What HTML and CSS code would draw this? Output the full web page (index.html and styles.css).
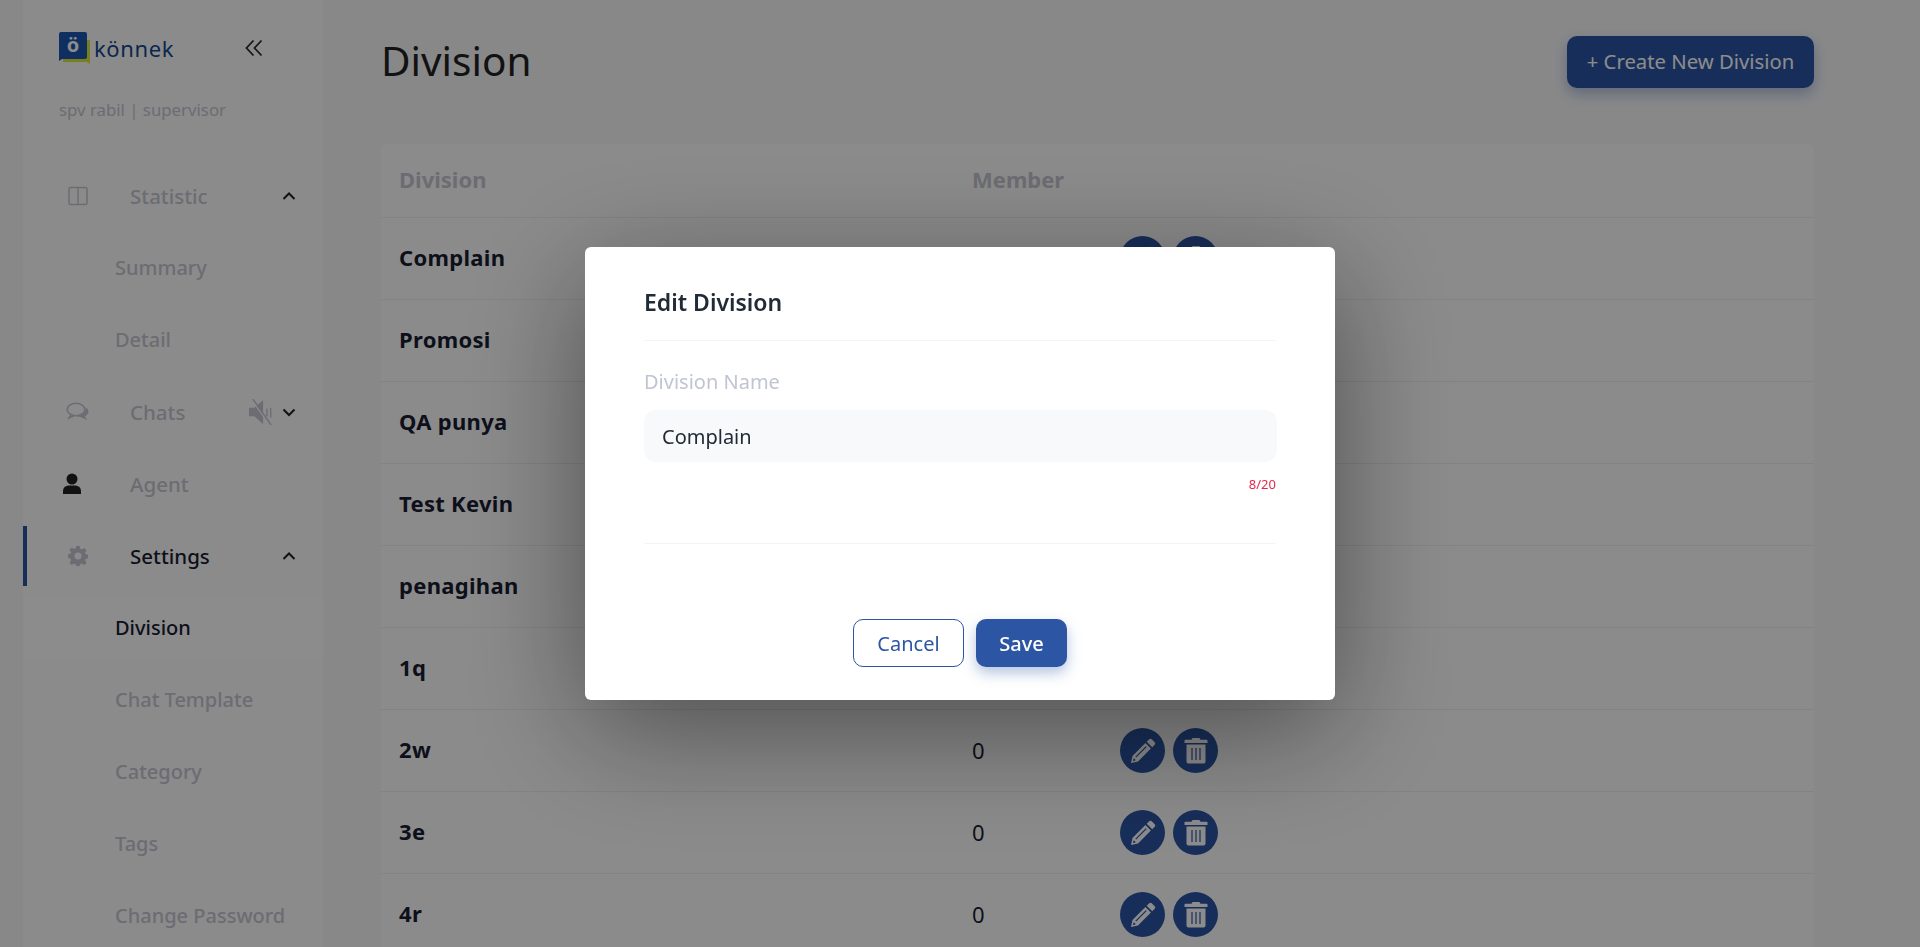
FILE: index.html
```html
<!DOCTYPE html>
<html lang="en">
<head>
  <meta charset="UTF-8" />
  <title>Division</title>
  <link rel="stylesheet" href="styles.css">
</head>
<body>

  <svg class="defs" width="0" height="0">
    <symbol id="i-pencil" viewBox="0 0 26 26">
      <path fill-rule="evenodd" d="M19.200 1.300a1.800 1.800 0 0 1 2.500 0l3 3a1.800 1.800 0 0 1 0 2.500l-2.500 2.500-5.500-5.500zM15.400 5.100l5.500 5.500L8 23.500 1 25l1.500-7zM15.800 8.200 5.300 18.700l.9.900L16.700 9.100zM3.600 20.500l-.7 2.600 2.600-.7-.5-1.400z"/>
    </symbol>
    <symbol id="i-trash" viewBox="0 0 24 26">
      <path fill-rule="evenodd" d="M8.500 0h7l1 1.800H22.500a1 1 0 0 1 1 1V5H.5V2.800a1 1 0 0 1 1-1h6zM2.500 6.500h19V23.500a2 2 0 0 1-2 2h-15a2 2 0 0 1-2-2zM7.400 10v12h1.200V10zM11.400 10v12h1.200V10zM15.400 10v12h1.200V10z"/>
    </symbol>
  </svg>

  <div class="pagina">
    <!-- Menu lateral -->
    <aside class="sidebar">
      <div class="logo-fila">
        <div class="logo">
          <svg class="logo-marca" width="32" height="32" viewBox="0 0 32 32">
            <path fill="#dde733" d="M4 8h27v24l-3-2H4z"/>
            <path fill="#1a57ae" d="M2 0h24a2 2 0 0 1 2 2v23a2 2 0 0 1-2 2H3l-3 2V2a2 2 0 0 1 2-2z"/>
            <text x="14" y="20" text-anchor="middle" class="logo-o">ö</text>
          </svg>
          <span class="logo-texto">könnek</span>
        </div>
        <svg class="colapsar" width="18" height="18" viewBox="0 0 18 18">
          <path d="M8.500 1.500 1.500 9l7 7.500M16.500 1.500 9.500 9l7 7.500"/>
        </svg>
      </div>
      <p class="usuario">spv rabil | supervisor</p>

      <nav class="menu">
        <div class="menu-item">
          <span class="menu-icono">
            <svg width="20" height="20" viewBox="0 0 20 20" class="gris-linea"><rect x="1" y="1.500" width="18" height="17" rx="1.500"/><path d="M10 1.500v17"/></svg>
          </span>
          <span class="menu-texto">Statistic</span>
          <svg class="flecha" width="14" height="14" viewBox="0 0 14 14"><path d="M1.500 10 7 4.500l5.500 5.500"/></svg>
        </div>
        <div class="submenu">
          <a class="sub-item">Summary</a>
          <a class="sub-item">Detail</a>
        </div>

        <div class="menu-item">
          <span class="menu-icono">
            <svg width="24" height="20" viewBox="0 0 24 20"><ellipse cx="10" cy="7.500" rx="8.800" ry="6.200" class="burbuja"/><path d="M5 12.500l-2 3.500 5-2.200" class="burbuja"/><path fill="#c5c5d0" d="M19.500 5.500c3.500 1.500 4.500 6-.5 8.800l2 3.700-6.500-3c-2 0-3.500-.5-4.500-1.200 5.500 0 10.500-3.300 9.500-8.300z"/></svg>
          </span>
          <span class="menu-texto">Chats</span>
          <svg class="mudo" width="26" height="26" viewBox="0 0 24 24">
            <path d="M0 8h5l8-7v22l-8-7H0z" fill="#c5c5d0"/>
            <path d="M16.500 9v7M20 8v9" class="mudo-barras"/>
            <path d="M2 0l17 24" class="mudo-hueco"/>
            <path d="M3.500 0l17 24" class="mudo-barras"/>
          </svg>
          <svg class="flecha" width="14" height="14" viewBox="0 0 14 14"><path d="M1.500 4.500 7 10l5.500-5.500"/></svg>
        </div>

        <div class="menu-item">
          <span class="menu-icono icono-izq">
            <svg width="20" height="22" viewBox="0 0 20 22" class="negro"><circle cx="10" cy="6" r="5.500"/><path d="M1 21v-3a5.500 5.500 0 0 1 5.500-5.500h7A5.500 5.500 0 0 1 19 18v3z"/></svg>
          </span>
          <span class="menu-texto">Agent</span>
        </div>

        <div class="menu-item activo">
          <span class="menu-icono">
            <svg width="20" height="20" viewBox="0 0 20 20"><path fill="#c5c5d0" fill-rule="evenodd" d="M8.300 0h3.400l.5 2.800 1.600.7 2.400-1.600 2.400 2.400-1.600 2.400.7 1.600 2.300.5v3.400l-2.300.5-.7 1.600 1.600 2.400-2.400 2.400-2.400-1.600-1.600.7-.5 2.300H8.300l-.5-2.300-1.600-.7-2.400 1.600-2.400-2.400 1.600-2.400-.7-1.600L0 11.700V8.300l2.300-.5.7-1.600L1.400 3.800l2.400-2.400 2.400 1.600 1.600-.7zM10 6.500a3.500 3.500 0 1 0 0 7 3.500 3.500 0 0 0 0-7z"/></svg>
          </span>
          <span class="menu-texto">Settings</span>
          <svg class="flecha" width="14" height="14" viewBox="0 0 14 14"><path d="M1.500 10 7 4.500l5.500 5.500"/></svg>
        </div>
        <div class="submenu">
          <a class="sub-item actual">Division</a>
          <a class="sub-item">Chat Template</a>
          <a class="sub-item">Category</a>
          <a class="sub-item">Tags</a>
          <a class="sub-item">Change Password</a>
        </div>
      </nav>
    </aside>

    <!-- Contenido -->
    <main class="contenido">
      <div class="encabezado">
        <h1>Division</h1>
        <button class="btn-crear">+ Create New Division</button>
      </div>

      <div class="tabla">
        <div class="fila cabecera">
          <span class="col-nombre">Division</span>
          <span class="col-miembros">Member</span>
        </div>
        <div class="fila"><span class="col-nombre">Complain</span><span class="col-miembros">0</span><span class="acciones"><a class="redondo"><svg class="ico-lapiz"><use href="#i-pencil"/></svg></a><a class="redondo"><svg class="ico-basura"><use href="#i-trash"/></svg></a></span></div>
        <div class="fila"><span class="col-nombre">Promosi</span><span class="col-miembros">0</span><span class="acciones"><a class="redondo"><svg class="ico-lapiz"><use href="#i-pencil"/></svg></a><a class="redondo"><svg class="ico-basura"><use href="#i-trash"/></svg></a></span></div>
        <div class="fila"><span class="col-nombre">QA punya</span><span class="col-miembros">0</span><span class="acciones"><a class="redondo"><svg class="ico-lapiz"><use href="#i-pencil"/></svg></a><a class="redondo"><svg class="ico-basura"><use href="#i-trash"/></svg></a></span></div>
        <div class="fila"><span class="col-nombre">Test Kevin</span><span class="col-miembros">0</span><span class="acciones"><a class="redondo"><svg class="ico-lapiz"><use href="#i-pencil"/></svg></a><a class="redondo"><svg class="ico-basura"><use href="#i-trash"/></svg></a></span></div>
        <div class="fila"><span class="col-nombre">penagihan</span><span class="col-miembros">0</span><span class="acciones"><a class="redondo"><svg class="ico-lapiz"><use href="#i-pencil"/></svg></a><a class="redondo"><svg class="ico-basura"><use href="#i-trash"/></svg></a></span></div>
        <div class="fila"><span class="col-nombre">1q</span><span class="col-miembros">0</span><span class="acciones"><a class="redondo"><svg class="ico-lapiz"><use href="#i-pencil"/></svg></a><a class="redondo"><svg class="ico-basura"><use href="#i-trash"/></svg></a></span></div>
        <div class="fila"><span class="col-nombre">2w</span><span class="col-miembros">0</span><span class="acciones"><a class="redondo"><svg class="ico-lapiz"><use href="#i-pencil"/></svg></a><a class="redondo"><svg class="ico-basura"><use href="#i-trash"/></svg></a></span></div>
        <div class="fila"><span class="col-nombre">3e</span><span class="col-miembros">0</span><span class="acciones"><a class="redondo"><svg class="ico-lapiz"><use href="#i-pencil"/></svg></a><a class="redondo"><svg class="ico-basura"><use href="#i-trash"/></svg></a></span></div>
        <div class="fila"><span class="col-nombre">4r</span><span class="col-miembros">0</span><span class="acciones"><a class="redondo"><svg class="ico-lapiz"><use href="#i-pencil"/></svg></a><a class="redondo"><svg class="ico-basura"><use href="#i-trash"/></svg></a></span></div>
      </div>
    </main>
  </div>

  <!-- Ventana de edicion -->
  <div class="overlay">
    <div class="modal">
      <h2>Edit Division</h2>
      <div class="modal-cuerpo">
        <label class="etiqueta">Division Name</label>
        <input class="campo" type="text" value="Complain">
        <div class="contador">8/20</div>
      </div>
      <div class="modal-pie">
        <button class="btn-cancelar">Cancel</button>
        <button class="btn-guardar">Save</button>
      </div>
    </div>
  </div>

</body>
</html>
```

FILE: styles.css
```css
/* Estilos generales */
body {
  margin: 0;
  height: 947px;
  overflow: hidden;
  font-family: "Noto Sans", "Open Sans", sans-serif;
  background-color: #f8f8fa;
  color: #181c32;
}

.defs {
  position: absolute;
}

.pagina {
  display: flex;
  padding-left: 23px;
}

/* Menu lateral */
.sidebar {
  width: 300px;
  flex-shrink: 0;
  height: 947px;
  background-color: #fdfdfd;
}

.logo-fila {
  display: flex;
  align-items: center;
  justify-content: space-between;
  padding: 32px 60px 0 36px;
  height: 32px;
}

.logo {
  display: flex;
  align-items: center;
  gap: 3px;
}

.logo-o {
  font-family: "Noto Sans", sans-serif;
  font-size: 20px;
  font-weight: 700;
  fill: #fff;
}

.logo-texto {
  color: #14488f;
  font-size: 22px;
  letter-spacing: 0.6px;
}

.colapsar path {
  fill: none;
  stroke: #2a2a2a;
  stroke-width: 1.8;
}

.usuario {
  margin: 34px 0 0 36px;
  font-size: 16.800px;
  line-height: 24px;
  color: #c5c5d0;
}

.menu {
  margin-top: 38px;
}

.menu-item {
  display: flex;
  align-items: center;
  height: 72px;
  padding-left: 40px;
  padding-right: 27px;
  box-sizing: border-box;
  position: relative;
}

.menu-icono {
  flex: 0 0 30px;
  display: flex;
  justify-content: center;
  margin-right: 37px;
}

.icono-izq {
  justify-content: flex-start;
  margin-left: -1px;
  margin-right: 38px;
}

.menu-texto {
  flex: 1;
  font-size: 20.500px;
  font-weight: 500;
  color: #c5c5d0;
}

.activo .menu-texto {
  color: #181c32;
}

.activo::before {
  content: "";
  position: absolute;
  left: 0;
  top: 6px;
  width: 4px;
  height: 60px;
  background-color: #2c55a4;
}

.gris-linea * {
  fill: none;
  stroke: #c5c5d0;
  stroke-width: 1.500;
}

.burbuja {
  fill: none;
  stroke: #c5c5d0;
  stroke-width: 1.500;
}

.negro {
  fill: #222;
}

.flecha path {
  fill: none;
  stroke: #222;
  stroke-width: 2;
}

.mudo {
  margin-right: 7px;
}

.mudo-barras {
  fill: none;
  stroke: #c5c5d0;
  stroke-width: 1.300;
}

.mudo-hueco {
  fill: none;
  stroke: #fdfdfd;
  stroke-width: 1.300;
}

.submenu {
  display: flex;
  flex-direction: column;
}

.sub-item {
  display: block;
  height: 72px;
  line-height: 72px;
  padding-left: 92px;
  font-size: 20px;
  font-weight: 500;
  color: #c5c5d0;
}

.sub-item.actual {
  color: #181c32;
  background-color: #ffffff;
  height: 62px;
  line-height: 62px;
  margin: 5px 0;
}

/* Contenido */
.contenido {
  flex: 1;
  padding: 0 106px 0 58px;
}

.encabezado {
  display: flex;
  align-items: center;
  justify-content: space-between;
  padding-top: 36px;
  height: 52px;
  margin-bottom: 56px;
}

h1 {
  margin: 0 0 3px;
  font-size: 40.500px;
  font-weight: 400;
  color: #222;
}

.btn-crear {
  height: 52px;
  width: 247px;
  border: none;
  border-radius: 10px;
  padding-bottom: 4px;
  background-color: #2c55a4;
  color: #fff;
  font-family: inherit;
  font-size: 20.300px;
  box-shadow: 0 6px 14px rgba(44, 85, 164, 0.35);
}

.tabla {
  background-color: #fefefe;
  border-radius: 8px;
}

.fila {
  display: flex;
  align-items: center;
  height: 81px;
  border-bottom: 1px solid #eceef2;
  font-size: 22px;
}

.col-nombre {
  width: 573px;
  padding-left: 18px;
  padding-bottom: 3px;
  font-weight: 700;
  letter-spacing: 0.3px;
}

.col-miembros {
  width: 148px;
  padding-bottom: 2px;
}

.cabecera {
  height: 73px;
}

.cabecera span {
  color: #c5c5d0;
  font-weight: 700;
  font-size: 22px;
  letter-spacing: 0;
  padding-bottom: 3px;
}

.acciones {
  display: flex;
  gap: 8px;
}

.redondo {
  width: 45px;
  height: 45px;
  border-radius: 50%;
  background-color: #2c55a4;
  display: flex;
  align-items: center;
  justify-content: center;
}

.redondo svg {
  fill: #fff;
}

.ico-lapiz {
  width: 26px;
  height: 26px;
}

.ico-basura {
  width: 24px;
  height: 26px;
}

/* Ventana de edicion */
.overlay {
  position: fixed;
  inset: 0;
  background-color: rgba(0, 0, 0, 0.45);
  display: flex;
  align-items: center;
  justify-content: center;
}

.modal {
  width: 750px;
  height: 453px;
  box-sizing: border-box;
  padding: 0 59px;
  background-color: #fff;
  border-radius: 6px;
  box-shadow: 0 30px 120px rgba(0, 0, 0, 0.45);
  display: flex;
  flex-direction: column;
}

h2 {
  margin: 0;
  height: 93px;
  line-height: 110px;
  font-size: 23px;
  font-weight: 600;
  color: #212b36;
  border-bottom: 1px solid #f3f4f6;
}

.modal-cuerpo {
  height: 203px;
  box-sizing: border-box;
  padding-top: 27px;
  border-bottom: 1px solid #f3f4f6;
}

.etiqueta {
  display: block;
  font-size: 20px;
  line-height: 28px;
  color: #c1c4d2;
  margin-bottom: 14px;
}

.campo {
  display: block;
  width: calc(100% + 1px);
  height: 52px;
  box-sizing: border-box;
  border: none;
  border-radius: 12px;
  padding: 0 18px;
  background-color: #f8f9fb;
  font-family: inherit;
  font-size: 20px;
  color: #212b36;
}

.contador {
  text-align: right;
  font-size: 13px;
  color: #e5294a;
  margin-top: 13px;
}

.modal-pie {
  display: flex;
  justify-content: center;
  gap: 12px;
  padding-top: 75px;
}

.btn-cancelar, .btn-guardar {
  height: 48px;
  border-radius: 10px;
  font-family: inherit;
  font-size: 20px;
}

.btn-cancelar {
  width: 111px;
  background-color: #fff;
  border: 1px solid #2c55a4;
  color: #2c55a4;
}

.btn-guardar {
  width: 91px;
  background-color: #2c55a4;
  border: none;
  color: #fff;
  font-weight: 500;
  box-shadow: 0 6px 14px rgba(44, 85, 164, 0.35);
}
```
